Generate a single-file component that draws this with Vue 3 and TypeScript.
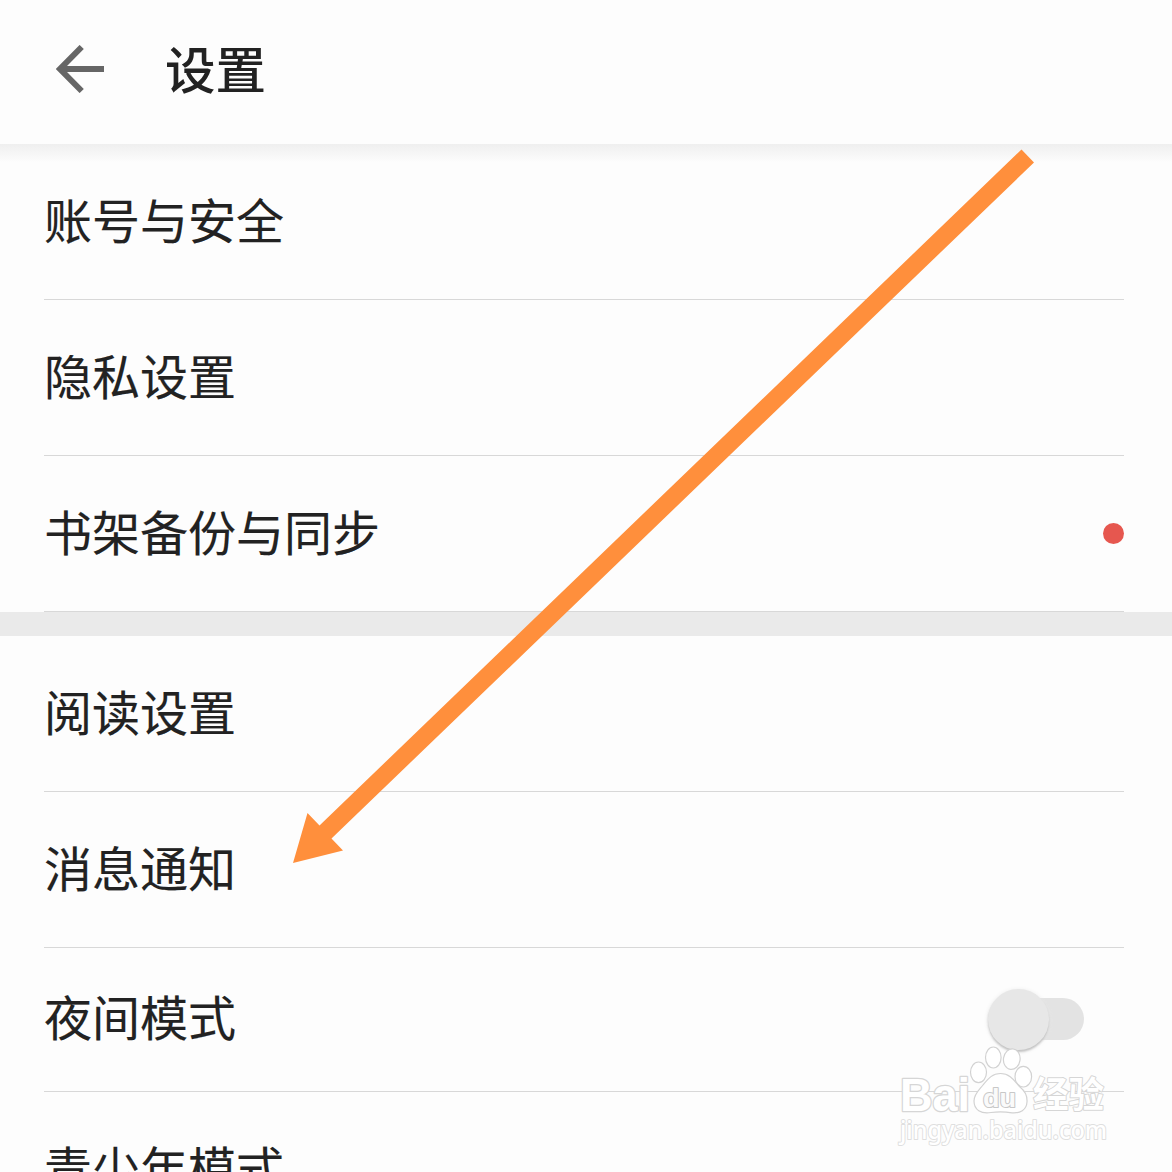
<script setup lang="ts">
import { ref } from 'vue'

interface SettingItem {
  label: string
  badge?: boolean
  toggle?: boolean
}

const nightMode = ref(false)

const groups: SettingItem[][] = [
  [
    { label: '账号与安全' },
    { label: '隐私设置' },
    { label: '书架备份与同步', badge: true },
  ],
  [
    { label: '阅读设置' },
    { label: '消息通知' },
    { label: '夜间模式', toggle: true },
    { label: '青少年模式' },
  ],
]
</script>

<template>
  <div class="screen">
    <header class="bar">
      <svg class="back" width="48" height="48" viewBox="0 0 48 48">
        <path d="M48 24H5M25.700 2L4 24l21.700 22" fill="none" stroke="#666" stroke-width="5.9" />
      </svg>
      <h1 class="title">设置</h1>
    </header>

    <main class="list">
      <section v-for="(group, g) in groups" :key="g" class="group">
        <div
          v-for="item in group"
          :key="item.label"
          class="row"
          :class="{ compact: item.toggle }"
        >
          <span class="label">{{ item.label }}</span>
          <span v-if="item.badge" class="dot"></span>
          <button
            v-if="item.toggle"
            class="switch"
            :class="{ on: nightMode }"
            @click="nightMode = !nightMode"
          >
            <span class="knob"></span>
          </button>
        </div>
      </section>
    </main>

    <svg class="pointer" width="1172" height="1172" viewBox="0 0 1172 1172">
      <path
        d="M1021.5 149.500L1034 162.500L331.500 838.500L343 850.500L293 863L307.500 813L319.500 825.500Z"
        fill="#ff8f3c"
      />
    </svg>

    <svg class="watermark" width="230" height="120" viewBox="890 1040 230 120">
      <g fill="#fff" stroke="#d2d2d2" stroke-width="1.2">
        <ellipse cx="978.500" cy="1072.300" rx="8" ry="10.300" />
        <ellipse cx="993.300" cy="1057.500" rx="7.800" ry="10.500" />
        <ellipse cx="1011.800" cy="1059.200" rx="8.300" ry="10.300" transform="rotate(8 1012 1059)" />
        <ellipse cx="1023.300" cy="1076.700" rx="8.300" ry="10.300" />
        <path d="M1000.500 1073.500C1011 1073.500 1015 1082 1020 1087C1025 1091 1027.500 1095 1027 1102C1026.500 1110 1020 1113.500 1012 1112.800C1004 1111.500 998 1111.500 991 1112.500C981 1114 974 1110 974 1101C974 1094 979 1090 983 1085C988 1079 992 1073.500 1000.500 1073.500Z" />
      </g>
      <g class="mark">
        <text class="latin" x="900" y="1111" textLength="70" lengthAdjust="spacingAndGlyphs" font-size="47">Bai</text>
        <text class="du" x="983" y="1106.500" textLength="33" lengthAdjust="spacingAndGlyphs" font-size="25">du</text>
        <text class="han" x="1033" y="1108" textLength="71" lengthAdjust="spacingAndGlyphs" font-size="36">经验</text>
        <text class="url" x="900" y="1139" textLength="207" lengthAdjust="spacingAndGlyphs" font-size="24.500">jingyan.baidu.com</text>
      </g>
    </svg>
  </div>
</template>

<style>
body {
  margin: 0;
  background: #fdfdfd;
}
</style>

<style scoped>
.screen {
  position: relative;
  width: 1172px;
  height: 1172px;
  overflow: hidden;
  background: #fdfdfd;
  color: #222;
  font-family: "Noto Sans CJK SC", sans-serif;
}

.bar {
  display: flex;
  align-items: center;
  box-sizing: border-box;
  height: 144px;
  padding: 0 56px 6px;
}

.back {
  flex: none;
}

.title {
  margin: 0 0 0 61px;
  padding-bottom: 5px;
  font-size: 50.500px;
  line-height: 72px;
  font-weight: 500;
}

.list {
  background: linear-gradient(#efefef, #f5f5f5 8px, #fafafa 15px, transparent 18px);
}

.group + .group {
  border-top: 24px solid #eaeaea;
}

.row {
  display: flex;
  align-items: center;
  justify-content: space-between;
  box-sizing: border-box;
  height: 156px;
  margin: 0 48px 0 44px;
  border-bottom: 1px solid #d8d8d8;
}

.row.compact {
  height: 144px;
}

.label {
  padding-bottom: 8px;
  font-size: 48px;
  line-height: 70px;
  -webkit-text-stroke: 0.15px #222;
}

.compact .label {
  padding-bottom: 10px;
}

.dot {
  width: 21px;
  height: 21px;
  border-radius: 50%;
  background: #e6574f;
}

.switch {
  display: flex;
  align-items: center;
  width: 94px;
  height: 42px;
  margin: 0 40px 1px 0;
  padding: 0;
  border: 0;
  border-radius: 21px;
  background: linear-gradient(to right, transparent 30px, #e3e3e3 30px);
}

.knob {
  flex: none;
  width: 61px;
  height: 61px;
  margin-left: -2px;
  border-radius: 50%;
  background: #e7e7e7;
  box-shadow: 0 2px 2px #c4c4c4, 0 1px 5px #e8e8e8;
}

.switch.on .knob {
  margin-left: 35px;
}

.pointer {
  position: absolute;
  top: 0;
  left: 0;
  pointer-events: none;
}

.watermark {
  position: absolute;
  top: 1040px;
  left: 890px;
  pointer-events: none;
}

.mark {
  fill: #fff;
  stroke: #d6d6d6;
  stroke-width: 2px;
  paint-order: stroke;
  stroke-linejoin: round;
}

.latin,
.du {
  font-family: "Liberation Sans", sans-serif;
  font-weight: 700;
}

.latin {
  stroke-width: 2.6px;
}

.du {
  fill: #fafafa;
  stroke: #c8c8c8;
}

.han {
  font-family: "Noto Sans CJK SC", sans-serif;
  font-weight: 700;
}

.url {
  font-family: "Noto Sans", sans-serif;
  font-weight: 500;
  stroke: #dfdfdf;
}
</style>
